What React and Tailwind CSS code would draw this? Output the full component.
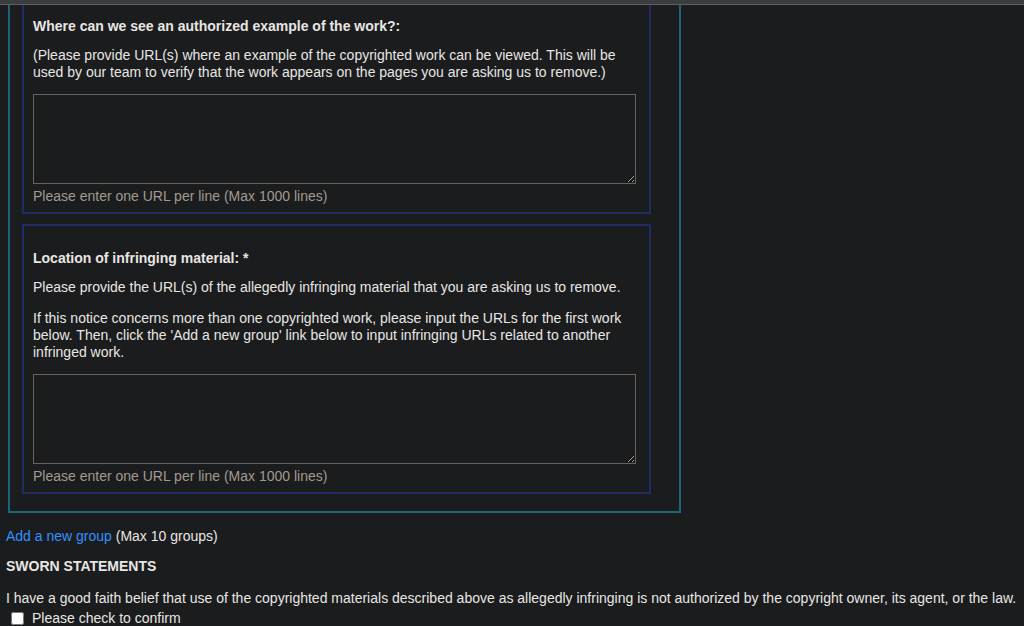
import React from 'react';

const HelpText = () => (
  <div className="mt-[4px] text-[#a09a90]">Please enter one URL per line (Max 1000 lines)</div>
);

const UrlBox = () => (
  <textarea className="block mt-[13px] w-[603px] h-[90px] bg-[#1b1c1e] border border-[#67625b] text-[#e8e6e3] outline-none" />
);

export default function App() {
  return (
    <div className="h-[626px] overflow-hidden bg-[#1b1c1e] text-[#e8e6e3] font-['Liberation_Sans',Arial,sans-serif] text-[14px] leading-[17px]">
      {/* strip left over from the scrolled page */}
      <div className="h-[5px] bg-[#3b3c3e] border-b border-[#606060]" />

      <div className="pl-[8px]">
        {/* group container */}
        <div className="w-[673px] border-2 border-t-0 border-[#1e6478] pl-[12px] pb-[17px]">
          <div className="w-[629px] border-2 border-t-0 border-[#1f2c66] px-[9px] pt-[13px] pb-[7px]">
            <div className="font-bold">Where can we see an authorized example of the work?:</div>
            <p className="mt-[12px]">
              (Please provide URL(s) where an example of the copyrighted work can be viewed. This will be used by our team to verify that the work appears on the pages you are asking us to remove.)
            </p>
            <UrlBox />
            <HelpText />
          </div>

          <div className="mt-[10px] w-[629px] border-2 border-[#1f2c66] px-[9px] pt-[24px] pb-[7px]">
            <div className="font-bold">Location of infringing material: *</div>
            <p className="mt-[12px]">
              Please provide the URL(s) of the allegedly infringing material that you are asking us to remove.
            </p>
            <p className="mt-[14px] w-[600px]">
              If this notice concerns more than one copyrighted work, please input the URLs for the first work below. Then, click the 'Add a new group' link below to input infringing URLs related to another infringed work.
            </p>
            <UrlBox />
            <HelpText />
          </div>
        </div>
      </div>

      <div className="pl-[6px]">
        <div className="mt-[15px]">
          <a href="#" className="text-[#3391ff]">Add a new group</a> (Max 10 groups)
        </div>
        <div className="mt-[13px] font-bold">SWORN STATEMENTS</div>
        <p className="mt-[15px] whitespace-nowrap">
          I have a good faith belief that use of the copyrighted materials described above as allegedly infringing is not authorized by the copyright owner, its agent, or the law.
        </p>
        <label className="mt-[3px] flex items-center">
          <input type="checkbox" className="ml-[5px] mr-[8px] w-[13px] h-[13px]" />
          <span>Please check to confirm</span>
        </label>
      </div>
    </div>
  );
}
